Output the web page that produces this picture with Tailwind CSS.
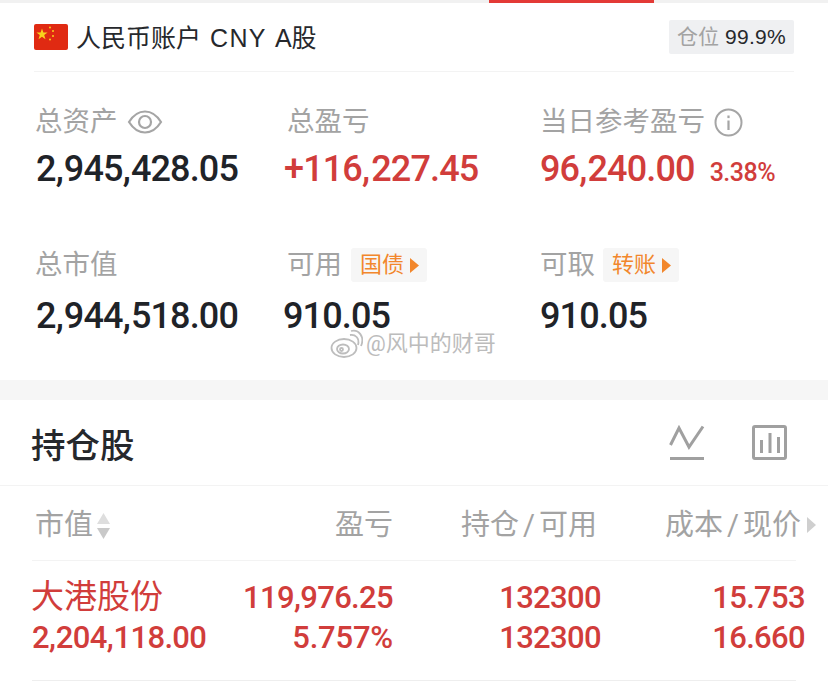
<!DOCTYPE html>
<html lang="zh-CN">
<head>
<meta charset="utf-8">
<script src="https://cdn.jsdelivr.net/npm/@tailwindcss/browser@4"></script>
</head>
<body class="m-0 bg-white">
<div class="relative w-[828px] h-[682px] overflow-hidden bg-white font-['Roboto','Noto_Sans_CJK_SC',sans-serif]">
  <!-- tab strip -->
  <div class="h-[3px] bg-[#f1f1f1] pl-[489px]"><div class="w-[165px] h-[3px] bg-[#e33a36]"></div></div>

  <!-- account header -->
  <div class="mx-[34px] h-[69px] border-b border-[#f3f3f3] flex items-start">
    <svg class="mt-[21px] shrink-0" width="34" height="26" viewBox="0 0 34 26">
      <rect width="34" height="26" rx="2" fill="#e02a12"/>
      <polygon fill="#f8d21c" points="8,4.5 9.4,8.6 13.6,8.6 10.2,11.1 11.5,15.2 8,12.7 4.5,15.2 5.8,11.1 2.4,8.6 6.6,8.6"/>
      <circle cx="16" cy="3.5" r="1" fill="#f8d21c"/><circle cx="19" cy="7" r="1" fill="#f8d21c"/><circle cx="19" cy="12" r="1" fill="#f8d21c"/><circle cx="16" cy="15.5" r="1" fill="#f8d21c"/>
    </svg>
    <div class="ml-[8px] mt-[18px] text-[25px] leading-[34px] text-[#26282c] whitespace-nowrap font-['Liberation_Sans','Noto_Sans_CJK_SC',sans-serif]">人民币账户 <span class="ml-[2px] tracking-[1.4px]">CNY</span> <span class="ml-[1px]">A股</span></div>
    <div class="ml-auto mt-[17px] w-[125px] h-[34px] rounded-[2px] bg-[#eff0f2] flex items-center justify-center text-[21px] whitespace-nowrap font-['Liberation_Sans','Noto_Sans_CJK_SC',sans-serif]">
      <span class="text-[#a3a3a3]">仓位</span><span class="ml-[6px] text-[#26282c] tracking-[0.3px]">99.9%</span>
    </div>
  </div>

  <!-- stats -->
  <div class="pl-[35px] pt-[32px] h-[308px] grid grid-cols-[252px_253px_1fr] grid-rows-[143px_144px]">
    <div>
      <div class="flex items-center h-[36px] text-[27.5px] text-[#a3a3a3] leading-none">总资产
        <svg class="ml-[9px]" width="36" height="26" viewBox="0 0 36 26" fill="none" stroke="#a5a5a5" stroke-width="2.2"><path d="M2 13C7 5 12 2.5 18 2.5S29 5 34 13C29 21 24 23.5 18 23.5S7 21 2 13Z"/><circle cx="18" cy="13" r="6"/></svg>
      </div>
      <div class="mt-[8px] ml-[1px] text-[36px] leading-[42px] font-medium text-[#1f2328] tracking-[-0.85px] whitespace-nowrap">2<span class="pr-[1px]">,</span>945<span class="pr-[1px]">,</span>428.05</div>
    </div>
    <div>
      <div class="flex items-center h-[36px] text-[27.5px] text-[#a3a3a3] leading-none">总盈亏</div>
      <div class="mt-[8px] -ml-[3px] text-[36px] leading-[42px] font-medium text-[#d13d3b] tracking-[-0.85px] whitespace-nowrap">+116<span class="pr-[2px]">,</span>227.45</div>
    </div>
    <div>
      <div class="flex items-center h-[36px] text-[27.5px] text-[#a3a3a3] leading-none">当日参考盈亏
        <svg class="ml-[9px]" width="29" height="29" viewBox="0 0 29 29" fill="none"><circle cx="14.5" cy="14.5" r="13" stroke="#a5a5a5" stroke-width="2"/><rect x="13.4" y="12.5" width="2.2" height="9.5" fill="#a5a5a5"/><rect x="13.4" y="7.5" width="2.2" height="2.6" fill="#a5a5a5"/></svg>
      </div>
      <div class="mt-[8px] flex items-baseline whitespace-nowrap text-[#d13d3b]">
        <span class="text-[36px] leading-[42px] font-medium tracking-[-0.85px]">96<span class="pr-[1px]">,</span>240.00</span>
        <span class="ml-[15px] text-[25px] font-medium tracking-[-0.5px]">3.38%</span>
      </div>
    </div>

    <div>
      <div class="flex items-center h-[36px] text-[27.5px] text-[#a3a3a3] leading-none">总市值</div>
      <div class="mt-[12px] ml-[1px] text-[36px] leading-[42px] font-medium text-[#1f2328] tracking-[-0.85px] whitespace-nowrap">2<span class="pr-[1px]">,</span>944<span class="pr-[1px]">,</span>518.00</div>
    </div>
    <div>
      <div class="flex items-center h-[36px] text-[27.5px] text-[#a3a3a3] leading-none">可用
        <span class="ml-[9px] w-[76px] h-[34px] rounded-[3px] bg-[#f6f6f6] flex items-center pl-[9px] text-[22px] text-[#f2872c]">国债<svg class="ml-[6px]" width="9" height="15" viewBox="0 0 9 15"><path d="M0 0L9 7.5L0 15Z" fill="#f2872c"/></svg></span>
      </div>
      <div class="mt-[12px] -ml-[4px] text-[36px] leading-[42px] font-medium text-[#1f2328] tracking-[-0.85px]">910.05</div>
    </div>
    <div>
      <div class="flex items-center h-[36px] text-[27.5px] text-[#a3a3a3] leading-none">可取
        <span class="ml-[8px] w-[76px] h-[34px] rounded-[3px] bg-[#f6f6f6] flex items-center pl-[9px] text-[22px] text-[#f2872c]">转账<svg class="ml-[6px]" width="9" height="15" viewBox="0 0 9 15"><path d="M0 0L9 7.5L0 15Z" fill="#f2872c"/></svg></span>
      </div>
      <div class="mt-[12px] text-[36px] leading-[42px] font-medium text-[#1f2328] tracking-[-0.85px]">910.05</div>
    </div>
  </div>

  <div class="h-[20px] bg-[#f6f6f6]"></div>

  <!-- holdings -->
  <div class="h-[86px] pl-[31px] pr-[40px] flex items-center border-b border-[#f3f3f3]">
    <div class="text-[34.5px] font-medium text-[#26282c] leading-none mt-[7px]">持仓股</div>
    <svg class="ml-auto" width="36" height="36" viewBox="0 0 36 36" fill="none" stroke="#a0a0a0"><path d="M1.5 20L10 3L20 22L34 1.5" stroke-width="3"/><rect x="1" y="32" width="34" height="3" fill="#a0a0a0" stroke="none"/></svg>
    <svg class="ml-[47px]" width="36" height="36" viewBox="0 0 36 36" fill="none"><rect x="1.5" y="1.5" width="32" height="32" rx="1.5" stroke="#a0a0a0" stroke-width="3"/><rect x="8" y="15" width="3" height="13" fill="#a0a0a0"/><rect x="16.5" y="8" width="3" height="20" fill="#a0a0a0"/><rect x="25" y="12" width="3" height="16" fill="#a0a0a0"/></svg>
  </div>

  <div class="mx-[32px] h-[75px] pt-[4px] border-b border-[#f3f3f3] flex items-center text-[29px] text-[#a3a3a3] leading-none">
    <div class="pl-[3px] flex items-center w-[200px] shrink-0">市值
      <svg class="ml-[3px]" width="15" height="27" viewBox="0 0 15 27"><path d="M7.5 1L14 12H1Z" fill="#dedede"/><path d="M1 16H14L7.5 27Z" fill="#c9c9c9"/></svg>
    </div>
    <div class="w-[161px] shrink-0 text-right">盈亏</div>
    <div class="w-[204px] shrink-0 text-right whitespace-nowrap">持仓<span class="mx-[4px]">/</span>可用</div>
    <div class="w-[204px] shrink-0 text-right whitespace-nowrap">成本<span class="mx-[4px]">/</span>现价</div>
    <svg class="ml-[6px] shrink-0" width="9" height="16" viewBox="0 0 9 16"><path d="M0 0L9 8L0 16Z" fill="#cfcfcf"/></svg>
  </div>

  <div class="mx-[32px] h-[120px] border-b border-[#eeeeee] text-[#d13d3b] pt-[17px] grid grid-cols-[200px_161px_208px_204px] grid-rows-[40px_40px] text-[31px] leading-[40px] font-medium tracking-[-0.65px]">
    <div class="text-[33px] -mt-[1px] -ml-[1px] font-normal tracking-normal whitespace-nowrap">大港股份</div>
    <div class="text-right">119,976.25</div>
    <div class="text-right">132300</div>
    <div class="text-right">15.753</div>
    <div class="whitespace-nowrap">2<span class="pr-[0.5px]">,</span>204<span class="pr-[0.5px]">,</span>118.00</div>
    <div class="text-right tracking-[-0.2px]">5.757%</div>
    <div class="text-right">132300</div>
    <div class="text-right">16.660</div>
  </div>

  <!-- watermark -->
  <div class="absolute left-[330px] top-[329px] flex items-center text-[22px] leading-none text-[#bcbcbc] [text-shadow:0_0_3px_#fff,0_0_3px_#fff] whitespace-nowrap">
    <svg width="33" height="30" viewBox="0 0 33 30" fill="none" stroke="#bdbdbd" stroke-width="1.8"><ellipse cx="14" cy="19" rx="12.5" ry="9"/><ellipse cx="13" cy="20" rx="6" ry="4.5"/><circle cx="11.5" cy="20.5" r="1.5"/><path d="M20 6C25 5 30 9 28 16"/><path d="M21 2C29 0 35 8 31 17"/></svg>
    <span class="ml-[3px]">@风中的财哥</span>
  </div>
</div>
</body>
</html>
